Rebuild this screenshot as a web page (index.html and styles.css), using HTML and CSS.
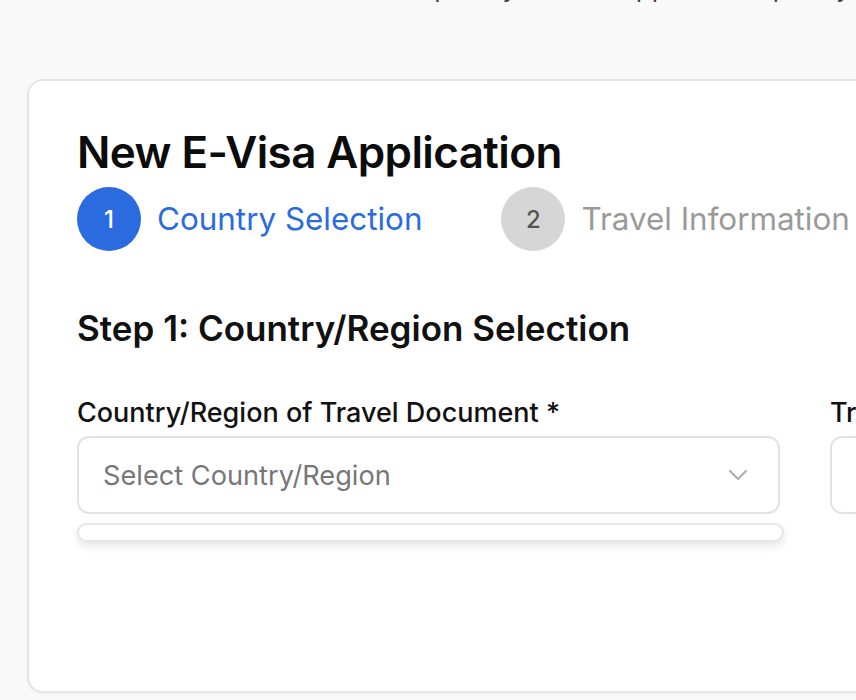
FILE: index.html
```html
<!DOCTYPE html>
<html lang="en">
<head>
<meta charset="utf-8">
<title>New E-Visa Application</title>
<link rel="stylesheet" href="styles.css">
</head>
<body>
<div class="page">
  <p class="intro">Complete your visa application quickly and easily in simple steps</p>
  <main class="card">
    <h1 class="title">New E-Visa Application</h1>
    <ol class="steps">
      <li class="step active"><span class="num">1</span><span class="label">Country Selection</span></li>
      <li class="step"><span class="num">2</span><span class="label">Travel Information</span></li>
    </ol>
    <h2 class="section">Step 1: Country/Region Selection</h2>
    <div class="fields">
      <div class="field">
        <label class="field-label">Country/Region of Travel Document *</label>
        <div class="select">
          <span class="placeholder">Select Country/Region</span>
          <svg class="chev" width="20" height="12" viewBox="0 0 20 12"><path d="M2 2l8 8 8-8" fill="none" stroke="#b0b0b0" stroke-width="2.2" stroke-linecap="round" stroke-linejoin="round"/></svg>
        </div>
        <div class="dropdown"></div>
      </div>
      <div class="field">
        <label class="field-label">Travel Document Type *</label>
        <div class="select"></div>
      </div>
    </div>
  </main>
</div>
</body>
</html>
```

FILE: styles.css
```css
* { box-sizing: border-box; }
html, body { margin: 0; padding: 0; }
body {
  background: #f9f9f9;
  font-family: Inter, "Noto Sans", sans-serif;
  color: #111;
  overflow: hidden;
  width: 856px;
  height: 700px;
}
.page {
  padding-left: 27px;
  width: 1400px;
}
.intro {
  margin: -30px 0 0 0;
  height: 36px;
  font-size: 26px;
  line-height: 36px;
  color: #444;
  padding-left: 350px;
  white-space: nowrap;
}
.card {
  margin-top: 73px;
  background: #fff;
  border: 2px solid #e4e4e4;
  border-radius: 16px;
  height: 614px;
  padding: 46px 48px;
  box-shadow: 0 2px 3px rgba(0,0,0,0.04);
}
.title {
  margin: 0;
  font-size: 44px;
  font-weight: 600;
  line-height: 50px;
  letter-spacing: -0.6px;
  color: #0c0c0c;
}
.steps {
  list-style: none;
  margin: 10px 0 0 0;
  padding: 0;
  display: flex;
  gap: 79px;
}
.step {
  display: flex;
  align-items: center;
  gap: 16px;
}
.num {
  width: 64px;
  height: 64px;
  border-radius: 50%;
  background: #d6d6d6;
  color: #555;
  display: flex;
  align-items: center;
  justify-content: center;
  font-size: 24px;
  font-weight: 500;
}
.label {
  font-size: 31.4px;
  color: #9a9a9a;
}
.step.active .num { background: #2b6be0; color: #fff; }
.step.active .label { color: #2b6be0; }
.section {
  margin: 55px 0 0 0;
  font-size: 35px;
  font-weight: 600;
  line-height: 44px;
  color: #111;
}
.fields {
  margin-top: 46px;
  display: flex;
  gap: 50px;
}
.field {
  width: 703px;
  flex: none;
}
.field-label {
  display: block;
  font-size: 27px;
  font-weight: 500;
  line-height: 34px;
  color: #111;
  margin-bottom: 6px;
}
.select {
  height: 78px;
  border: 2px solid #e2e2e2;
  border-radius: 12px;
  display: flex;
  align-items: center;
  justify-content: space-between;
  padding: 0 30px 0 24px;
}
.placeholder {
  font-size: 27.2px;
  color: #777;
}
.dropdown {
  margin-top: 9px;
  width: 707px;
  height: 19px;
  border: 2px solid #e6e6e6;
  border-radius: 10px;
  box-shadow: 0 4px 8px rgba(0,0,0,0.10);
}
```
